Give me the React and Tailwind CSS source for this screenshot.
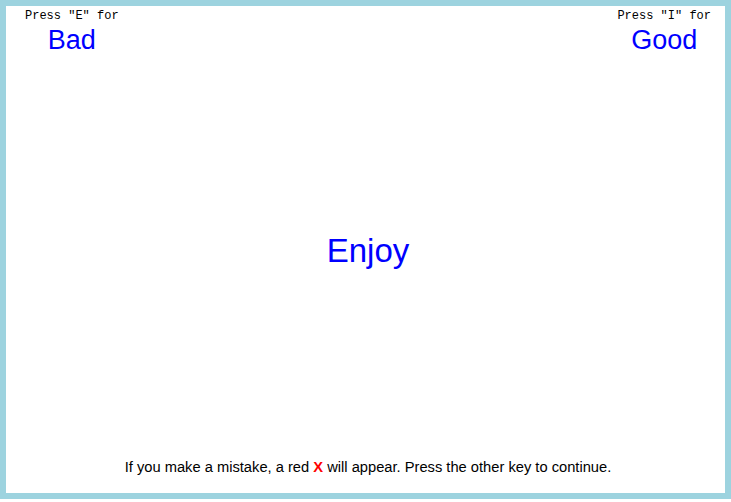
export default function App() {
  return (
    <div className="w-[731px] h-[499px] bg-white">
      <div className="w-full h-full border-[6px] border-[#9dd3df] flex flex-col" style={{ fontFamily: '"Liberation Sans", Arial, sans-serif' }}>
        <div className="flex justify-between pl-[19px] pr-[14px] pt-[3px]">
          <div className="flex flex-col items-center">
            <div className="text-[12px] leading-[14px] text-black" style={{ fontFamily: '"Liberation Mono", "Courier New", monospace' }}>Press "E" for</div>
            <div className="text-[27px] leading-[30px] text-[#0000ff] mt-[2px]">Bad</div>
          </div>
          <div className="flex flex-col items-center">
            <div className="text-[12px] leading-[14px] text-black" style={{ fontFamily: '"Liberation Mono", "Courier New", monospace' }}>Press "I" for</div>
            <div className="text-[27px] leading-[30px] text-[#0000ff] mt-[2px]">Good</div>
          </div>
        </div>
        <div className="flex-1 flex items-center justify-center pb-[12px] pl-[5px]">
          <div className="text-[33px] leading-[38px] text-[#0000ff]">Enjoy</div>
        </div>
        <div className="text-center text-[14.7px] leading-[17px] text-black pb-[17px] pl-[5px]">
          If you make a mistake, a red <span className="text-[#ff0000] font-bold">X</span> will appear. Press the other key to continue.
        </div>
      </div>
    </div>
  );
}
